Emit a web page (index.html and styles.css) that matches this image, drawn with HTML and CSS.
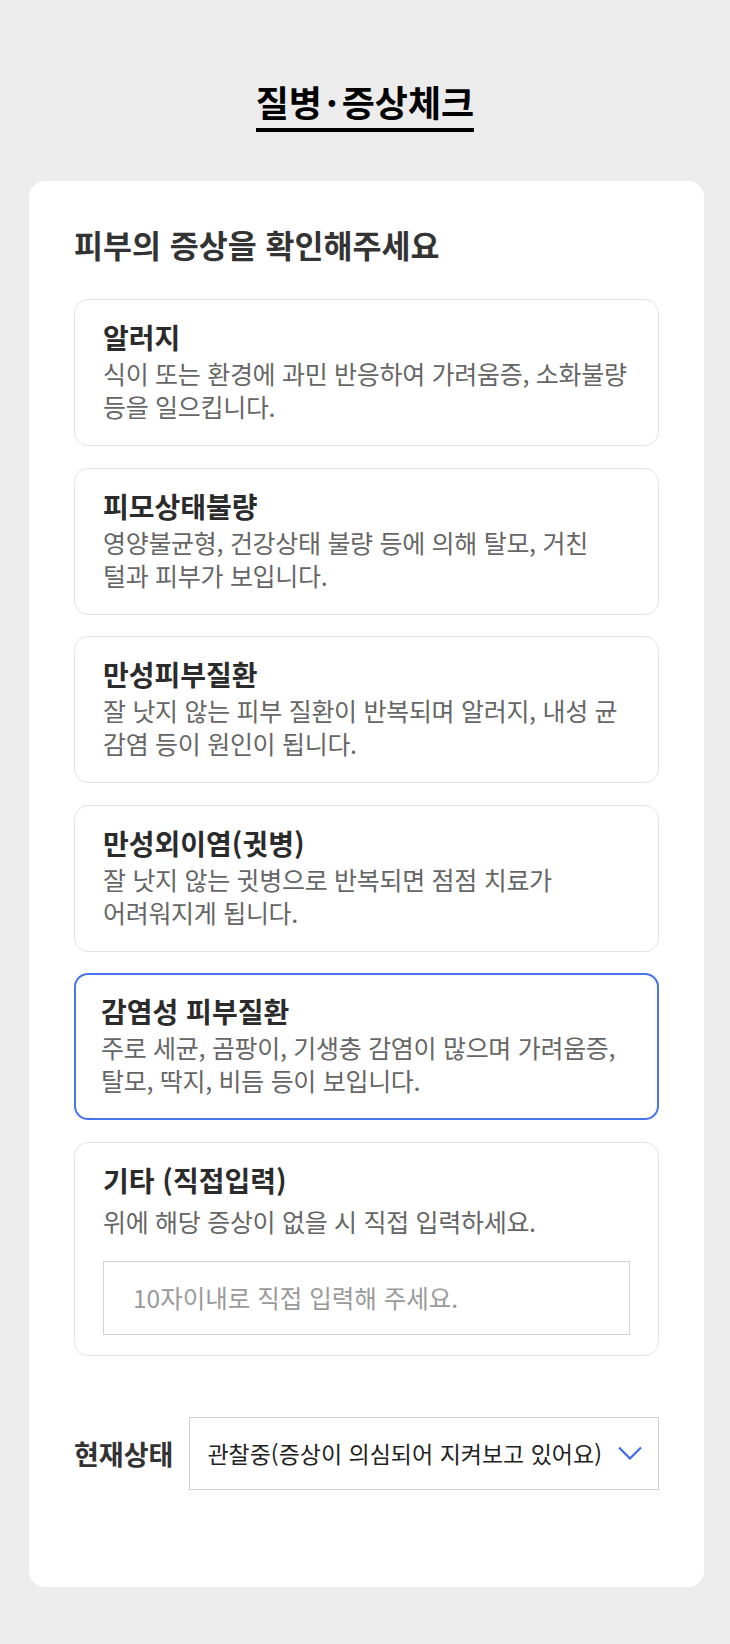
FILE: index.html
```html
<!DOCTYPE html>
<html lang="ko">
<head>
    <meta charset="UTF-8">
    <meta name="viewport" content="width=device-width, initial-scale=1.0">
    <title>질병·증상체크</title>
    <link rel="stylesheet" href="styles.css">
</head>
<body>
    <h1 class="page-title"><span>질병<i class="dot">·</i>증상체크</span></h1>

    <div class="panel">
        <h2 class="panel-title">피부의 증상을 확인해주세요</h2>

        <ul class="symptoms">
            <li class="symptom">
                <strong>알러지</strong>
                <p>식이 또는 환경에 과민 반응하여 가려움증, 소화불량<br>등을 일으킵니다.</p>
            </li>
            <li class="symptom">
                <strong>피모상태불량</strong>
                <p>영양불균형, 건강상태 불량 등에 의해 탈모, 거친<br>털과 피부가 보입니다.</p>
            </li>
            <li class="symptom">
                <strong>만성피부질환</strong>
                <p>잘 낫지 않는 피부 질환이 반복되며 알러지, 내성 균<br>감염 등이 원인이 됩니다.</p>
            </li>
            <li class="symptom">
                <strong>만성외이염(귓병)</strong>
                <p>잘 낫지 않는 귓병으로 반복되면 점점 치료가<br>어려워지게 됩니다.</p>
            </li>
            <li class="symptom active">
                <strong>감염성 피부질환</strong>
                <p>주로 세균, 곰팡이, 기생충 감염이 많으며 가려움증,<br>탈모, 딱지, 비듬 등이 보입니다.</p>
            </li>
            <li class="symptom etc">
                <strong>기타 (직접입력)</strong>
                <p>위에 해당 증상이 없을 시 직접 입력하세요.</p>
                <input type="text" class="etc-input" placeholder="10자이내로 직접 입력해 주세요.">
            </li>
        </ul>

        <div class="status">
            <span class="status-label">현재상태</span>
            <div class="status-select">
                <span>관찰중(증상이 의심되어 지켜보고 있어요)</span>
                <svg width="24" height="14" viewBox="0 0 24 14">
                    <polyline points="1,1.5 12,12.5 23,1.5" fill="none" stroke="#3a6cf0" stroke-width="2.2"/>
                </svg>
            </div>
        </div>
    </div>
</body>
</html>
```

FILE: styles.css
```css
*{
    margin: 0;
    padding: 0;
    box-sizing: border-box;
}
body{
    background-color: #ececec;
    font-family: "Noto Sans CJK KR", "Noto Sans", sans-serif;
    color: #333;
}
.page-title{
    padding-top: 79px;
    text-align: center;
    font-size: 36px;
    line-height: 44px;
    font-weight: 700;
    color: #000;
}
.page-title span{
    display: inline-block;
    padding-bottom: 5px;
    border-bottom: 4px solid #000;
}
.page-title .dot{
    font-style: normal;
    margin: 0 4px;
}
.panel{
    margin: 49px 26px 59px 29px;
    padding: 44px 45px 97px;
    background-color: #fff;
    border-radius: 16px;
}
.panel-title{
    font-size: 31.5px;
    line-height: 39px;
    font-weight: 700;
    color: #333;
    margin-bottom: 35px;
}
.symptoms{
    list-style: none;
    display: flex;
    flex-direction: column;
    gap: 21.6px;
}
.symptom{
    border: 1px solid #e3e3e3;
    border-radius: 14px;
    padding: 19px 28px 22px;
}
.symptom strong{
    display: block;
    font-size: 28px;
    line-height: 36px;
    font-weight: 700;
    color: #2b2b2b;
}
.symptom p{
    margin-top: 2px;
    font-size: 25px;
    line-height: 33px;
    letter-spacing: -0.3px;
    color: #666;
}
.symptom.active{
    border: 2px solid #4a74ea;
    padding: 18px 26px 21px 25px;
}
.etc{
    padding-bottom: 20px;
}
.etc p{
    margin-top: 7px;
}
.etc-input{
    display: block;
    width: 100%;
    height: 74px;
    margin-top: 23px;
    padding: 0 29px;
    border: 1px solid #d3d3d3;
    border-radius: 0;
    font-family: inherit;
    font-size: 24.5px;
    color: #333;
    outline: none;
}
.etc-input::placeholder{
    color: #9a9a9a;
}
.status{
    display: flex;
    align-items: center;
    gap: 16px;
    margin-top: 61px;
}
.status-label{
    font-size: 27px;
    font-weight: 700;
    color: #333;
}
.status-select{
    flex: 1;
    height: 73px;
    display: flex;
    align-items: center;
    justify-content: space-between;
    padding: 0 16px 0 17px;
    border: 1px solid #d0d0d0;
    font-size: 23px;
    color: #222;
}
.status-select svg{
    display: block;
}
```
